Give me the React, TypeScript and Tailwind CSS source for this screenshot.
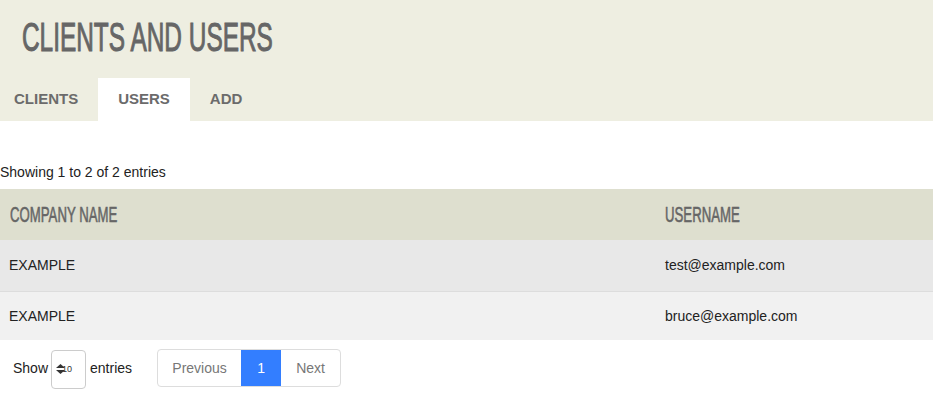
import React from "react";

const cond = { fontFamily: '"Liberation Sans Narrow", "Liberation Sans", Arial, sans-serif' };

export default function App() {
  return (
    <div className="w-[933px] h-[414px] bg-white overflow-hidden" style={{ fontFamily: '"Liberation Sans", Arial, sans-serif' }}>
      <div className="bg-[#eeeee1] h-[121px] flex flex-col">
        <div className="pt-[17px] pl-[22px] h-[78px]">
          <span
            className="inline-block origin-left scale-x-[0.61] text-[40px] leading-[40px] text-[#666666] whitespace-nowrap [-webkit-text-stroke:1px_#666666]"
            style={cond}
          >
            CLIENTS AND USERS
          </span>
        </div>
        <div className="flex h-[43px] text-[15px] font-bold text-[#6b6b6b] leading-[17px]">
          <div className="pl-[14px] pr-[20px] pt-[12px]">CLIENTS</div>
          <div className="px-[20px] pt-[12px] bg-white">USERS</div>
          <div className="px-[20px] pt-[12px]">ADD</div>
        </div>
      </div>

      <div className="mt-[41px] text-[14px] leading-[20px] text-[#222]">Showing 1 to 2 of 2 entries</div>

      <div className="mt-[7px]">
        <div className="grid grid-cols-[656px_1fr] bg-[#dedfcf] h-[51px]">
          <div className="pl-[10px] pt-[15px]">
            <span className="inline-block origin-left scale-x-[0.6] text-[22px] leading-[22px] text-[#666666] whitespace-nowrap [-webkit-text-stroke:0.6px_#666666]" style={cond}>
              COMPANY NAME
            </span>
          </div>
          <div className="pl-[9px] pt-[15px]">
            <span className="inline-block origin-left scale-x-[0.6] text-[22px] leading-[22px] text-[#666666] whitespace-nowrap [-webkit-text-stroke:0.6px_#666666]" style={cond}>
              USERNAME
            </span>
          </div>
        </div>
        <div className="grid grid-cols-[656px_1fr] bg-[#e8e8e8] h-[52px] border-b border-[#dddddd] text-[14px] text-[#222] items-center">
          <div className="pl-[9px]">EXAMPLE</div>
          <div className="pl-[9px]">test@example.com</div>
        </div>
        <div className="grid grid-cols-[656px_1fr] bg-[#f1f1f1] h-[48px] text-[14px] text-[#222] items-center">
          <div className="pl-[9px]">EXAMPLE</div>
          <div className="pl-[9px]">bruce@example.com</div>
        </div>
      </div>

      <div className="flex items-center h-[55px] pt-[1px] text-[14px] text-[#222]">
        <span className="ml-[13px]">Show</span>
        <div className="ml-[3px] w-[35px] h-[39px] border border-[#cccccc] rounded-[4px] bg-white flex items-center pl-[4px] mt-[2px]">
          <svg width="9" height="10" viewBox="0 0 9 10" className="shrink-0 relative z-10">
            <path d="M4.5 0 L9 4 L0 4 Z" fill="#333" />
            <path d="M0 6 L9 6 L4.5 10 Z" fill="#333" />
          </svg>
          <span className="ml-[-3px] text-[9px] leading-none text-[#333] whitespace-nowrap">10</span>
        </div>
        <span className="ml-[4px]">entries</span>
        <div className="ml-[25px] flex h-[38px] border border-[#dddddd] rounded-[4px] overflow-hidden text-[#777777]">
          <div className="w-[83px] flex items-center justify-center">Previous</div>
          <div className="w-[40px] flex items-center justify-center bg-[#337eff] text-white">1</div>
          <div className="w-[59px] flex items-center justify-center">Next</div>
        </div>
      </div>
    </div>
  );
}
